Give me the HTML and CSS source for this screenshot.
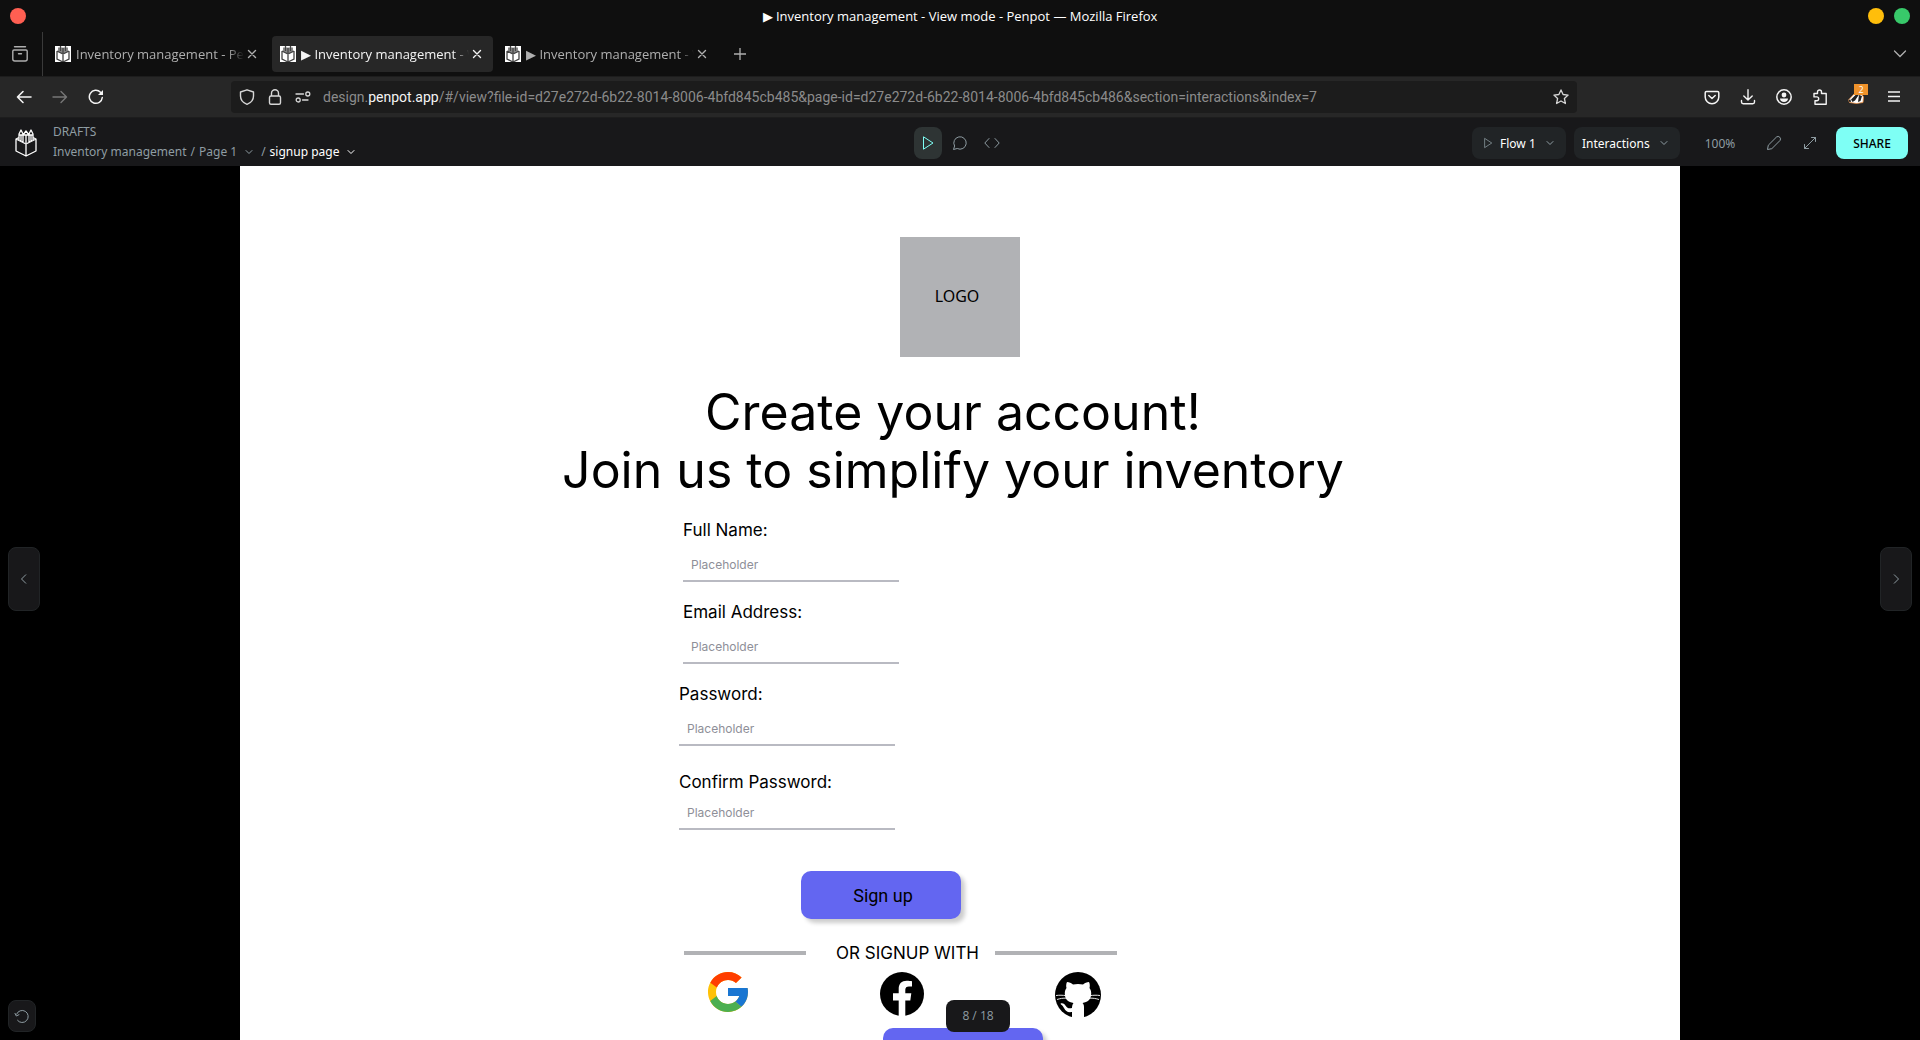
FILE: index.html
```html
<!DOCTYPE html>
<html lang="en">
<head>
<meta charset="utf-8">
<title>Inventory management - View mode - Penpot</title>
<link rel="stylesheet" href="styles.css">
</head>
<body>
<svg class="defs" aria-hidden="true">
  <symbol id="penpot" viewBox="0 0 22 28"><path d="M4 8.500 1 10v12l10 5 10-5V10l-3-1.500M1 10l10 5 10-5M11 15v12M4 11.500V5l2-4 2 4v8M8 6l3-4 3 4v7M14 5l2-4 2 4v6.500M6 6v6M11 6v8M16 6v6M4 6h14" fill="none" stroke="currentColor" stroke-width="1.300" stroke-linejoin="round"/></symbol>
  <symbol id="favicon" viewBox="0 0 16 16"><path fill="#fff" d="M0 0h16v16H0z"/><path d="M3 1.500h10V6L8 8 3 6z" fill="#888"/><path d="M2 5v8l6 3 6-3V5M2 5l6 3 6-3M8 8v8M5.500 0v5M8 2v5M10.500 0v5" fill="none" stroke="#444" stroke-width="1.300"/></symbol>
  <symbol id="x" viewBox="0 0 16 16"><path d="m4.500 4.500 7 7m0-7-7 7" fill="none" stroke="currentColor" stroke-width="1.400" stroke-linecap="round"/></symbol>
  <symbol id="chev" viewBox="0 0 16 16"><path d="m5 6.500 3 3 3-3" fill="none" stroke="currentColor" stroke-linecap="round" stroke-linejoin="round"/></symbol>
  <symbol id="play" viewBox="0 0 16 16"><path d="M3.500 1.800v12.400L13 8z" fill="none" stroke="currentColor" stroke-linejoin="round"/></symbol>
</svg>

<header class="titlebar">
  <button class="dot dot-close" aria-label="Close"></button>
  <span class="window-title">▶ Inventory management - View mode - Penpot — Mozilla Firefox</span>
  <span class="window-actions"><button class="dot dot-min" aria-label="Minimize"></button><button class="dot dot-max" aria-label="Maximize"></button></span>
</header>

<nav class="tabstrip" aria-label="Tabs">
  <button class="tab-history" aria-label="Recent browsing"><svg width="18" height="18" viewBox="0 0 18 18"><path d="M3.500 1.800h11M3 5h12a1.200 1.200 0 0 1 1.200 1.200V14a2 2 0 0 1-2 2H3.800a2 2 0 0 1-2-2V6.200A1.200 1.200 0 0 1 3 5zM7.500 8.700h3" fill="none" stroke="currentColor" stroke-width="1.400" stroke-linecap="round"/></svg></button>
  <div class="tab"><svg class="i16"><use href="#favicon"/></svg><span class="tab-title">Inventory management - Penpot</span><button class="tab-close" aria-label="Close tab"><svg class="i16"><use href="#x"/></svg></button></div>
  <div class="tab tab-active"><svg class="i16"><use href="#favicon"/></svg><span class="tab-title">▶ Inventory management - View mode</span><button class="tab-close" aria-label="Close tab"><svg class="i16"><use href="#x"/></svg></button></div>
  <div class="tab"><svg class="i16"><use href="#favicon"/></svg><span class="tab-title">▶ Inventory management - View mode</span><button class="tab-close" aria-label="Close tab"><svg class="i16"><use href="#x"/></svg></button></div>
  <button class="tab-new" aria-label="New tab"><svg class="i16" viewBox="0 0 16 16"><path d="M8 2v12M2 8h12" stroke="currentColor" stroke-width="1.300"/></svg></button>
  <button class="tab-list" aria-label="List all tabs"><svg class="i16" viewBox="0 0 16 16"><path d="m2.500 5 5.500 5.500L13.500 5" fill="none" stroke="currentColor" stroke-width="1.300" stroke-linecap="round"/></svg></button>
</nav>

<div class="toolbar">
  <button class="tool" aria-label="Back"><svg class="i16" viewBox="0 0 16 16"><path d="M15 8H1.500M7 2.500 1.500 8 7 13.500" fill="none" stroke="currentColor" stroke-width="1.600" stroke-linecap="round" stroke-linejoin="round"/></svg></button>
  <button class="tool tool-off" aria-label="Forward"><svg class="i16" viewBox="0 0 16 16"><path d="M1 8h13.500M9 2.500 14.500 8 9 13.500" fill="none" stroke="currentColor" stroke-width="1.400" stroke-linecap="round" stroke-linejoin="round"/></svg></button>
  <button class="tool" aria-label="Reload"><svg class="i16" viewBox="0 0 16 16"><path d="M14.300 8.500A6.500 6.500 0 1 1 12.500 3.300" fill="none" stroke="currentColor" stroke-width="1.500" stroke-linecap="round"/><path d="M15 1v5H10z" fill="currentColor"/></svg></button>
  <span class="spring"></span>
  <div class="urlbar">
    <svg class="i16" viewBox="0 0 16 16"><path d="M8 .8 14.500 3v4c0 4-2.500 6.800-6.500 8.300C4 13.800 1.500 11 1.500 7V3z" fill="none" stroke="currentColor" stroke-width="1.400" stroke-linejoin="round"/></svg>
    <svg class="i16" viewBox="0 0 16 16"><rect x="2.500" y="7" width="11" height="8.200" rx="1.500" fill="none" stroke="currentColor" stroke-width="1.400"/><path d="M4.500 7V4.300a3.500 3.500 0 0 1 7 0V7" fill="none" stroke="currentColor" stroke-width="1.400"/></svg>
    <svg class="i16" viewBox="0 0 16 16"><g fill="none" stroke="currentColor" stroke-width="1.300"><circle cx="12.800" cy="5" r="2"/><circle cx="3.200" cy="11" r="2"/><path d="M1 5h7.500M7.500 11H13" stroke-linecap="round"/></g></svg>
    <div class="url" role="textbox" aria-label="Address">design.<b>penpot.app</b>/#/view?file-id=d27e272d-6b22-8014-8006-4bfd845cb485&amp;page-id=d27e272d-6b22-8014-8006-4bfd845cb486&amp;section=interactions&amp;index=7</div>
    <svg class="i16" viewBox="0 0 16 16"><path d="m8 .9 2.100 4.600 5 .6-3.700 3.400 1 5L8 12l-4.400 2.500 1-5L.9 6.100l5-.6z" fill="none" stroke="currentColor" stroke-width="1.300" stroke-linejoin="round"/></svg>
  </div>
  <span class="spring"></span>
  <button class="tool" aria-label="Save to Pocket"><svg class="i16" viewBox="0 0 16 16"><path d="M2.500 2.500h11c.8 0 1.300.5 1.300 1.300V8A6.800 6.800 0 0 1 1.200 8V3.800c0-.8.5-1.300 1.300-1.300zM4.800 6.500 8 9.500l3.200-3" fill="none" stroke="currentColor" stroke-width="1.500" stroke-linecap="round" stroke-linejoin="round"/></svg></button>
  <button class="tool" aria-label="Downloads"><svg class="i16" viewBox="0 0 16 16"><path d="M8 .8v10M3.800 7 8 11l4.200-4M1.500 11.500V13c0 1 .7 1.700 1.700 1.700h9.600c1 0 1.700-.7 1.700-1.700v-1.500" fill="none" stroke="currentColor" stroke-width="1.400" stroke-linecap="round" stroke-linejoin="round"/></svg></button>
  <button class="tool" aria-label="Account"><svg class="i16" viewBox="0 0 16 16"><circle cx="8" cy="8" r="7.200" fill="none" stroke="currentColor" stroke-width="1.500"/><circle cx="8" cy="6" r="2.400" fill="currentColor"/><path d="M4 9.500h8c0 2-1.600 3.500-4 3.500s-4-1.500-4-3.500z" fill="currentColor"/></svg></button>
  <button class="tool" aria-label="Extensions"><svg class="i16" viewBox="0 0 16 16"><path d="M5.500 4.500V3a2 2 0 0 1 4 0v1.500h4.700v10.700H3v-3.500h1.800a1.900 1.900 0 0 0 0-3.800H2V4.500z" fill="none" stroke="currentColor" stroke-width="1.400" stroke-linejoin="round"/></svg></button>
  <button class="tool badger" aria-label="Privacy Badger, 2 blocked"><svg class="i16" viewBox="0 0 16 16"><path d="M.5 11 6 5l7-1 2.500 4-.5 5.500-6.500 1-7-1z" fill="#fff" stroke="#e8893a" stroke-width=".8"/><path d="M3 10.500 8 5.500h3L7 11.500 4.500 13zM11 6l3 1-1.500 5-2.500 1zM.5 11l2-.5.5 2.500-2-.3z" fill="#222"/></svg><span class="badge">2</span></button>
  <button class="tool menu" aria-label="Menu"><svg class="i16" viewBox="0 0 16 16"><path d="M2 3h12M2 7.500h12M2 12h12" stroke="currentColor" stroke-width="1.400"/></svg></button>
</div>

<header class="viewer-bar">
  <div class="viewer-left">
    <a href="#" class="logo" aria-label="Penpot"><svg width="22" height="28"><use href="#penpot"/></svg></a>
    <div class="crumbs">
      <span class="project">DRAFTS</span>
      <div class="path"><a href="#">Inventory management</a><span>/</span><button class="crumb">Page 1<svg class="i16"><use href="#chev"/></svg></button><span>/</span><button class="crumb crumb-current">signup page<svg class="i16"><use href="#chev"/></svg></button></div>
    </div>
  </div>
  <div class="modes">
    <button class="mode mode-active" aria-label="Interactions"><svg class="i16"><use href="#play"/></svg></button>
    <button class="mode" aria-label="Comments"><svg class="i16" viewBox="0 0 16 16"><path d="M1.500 14.500 2.600 11a6.200 6.200 0 1 1 2.600 2.500z" fill="none" stroke="currentColor" stroke-linejoin="round"/></svg></button>
    <button class="mode" aria-label="Inspect"><svg class="i16" viewBox="0 0 16 16"><path d="M5 3.500.8 8 5 12.500M11 3.500 15.200 8 11 12.500" fill="none" stroke="currentColor" stroke-linecap="round" stroke-linejoin="round"/></svg></button>
  </div>
  <div class="viewer-right">
    <div class="picker"><svg class="i12"><use href="#play"/></svg><select aria-label="Flow"><option>Flow 1</option></select><svg class="i16"><use href="#chev"/></svg></div>
    <div class="picker"><select aria-label="Interaction display"><option>Interactions</option></select><svg class="i16"><use href="#chev"/></svg></div>
    <button class="zoom-level">100%</button>
    <button class="edit" aria-label="Edit file"><svg class="i16" viewBox="0 0 16 16"><path d="m1.500 14.500.8-4.300L10.500 2a2.500 2.500 0 0 1 3.500 3.500L5.800 13.700z" fill="none" stroke="currentColor" stroke-linejoin="round"/></svg></button>
    <button class="edit" aria-label="Full screen"><svg class="i16" viewBox="0 0 16 16"><path d="M2.500 13.500l11-11M9.500 2.500h4v4M2.500 9.500v4h4" fill="none" stroke="currentColor" stroke-linecap="round" stroke-linejoin="round"/></svg></button>
    <button class="share">SHARE</button>
  </div>
</header>

<main class="stage">
  <div class="artboard">
    <div class="brand">LOGO</div>
    <h1 class="headline">Create your account!<br>Join us to simplify your inventory</h1>
    <form class="signup">
      <div class="field field-indent"><label for="name">Full Name:</label><input id="name" type="text" placeholder="Placeholder"></div>
      <div class="field field-indent"><label for="email">Email Address:</label><input id="email" type="email" placeholder="Placeholder"></div>
      <div class="field"><label for="pass">Password:</label><input id="pass" type="password" placeholder="Placeholder"></div>
      <div class="field field-confirm"><label for="confirm">Confirm Password:</label><input id="confirm" type="password" placeholder="Placeholder"></div>
      <button class="primary" type="submit">Sign up</button>
      <div class="divider"><span class="rule"></span><span class="divider-text">OR SIGNUP WITH</span><span class="rule"></span></div>
      <div class="social">
        <a href="#" aria-label="Google"><svg width="40" height="40" viewBox="4 4 40 40"><path fill="#FFC107" d="M43.611,20.083H42V20H24v8h11.303c-1.649,4.657-6.080,8-11.303,8c-6.627,0-12-5.373-12-12c0-6.627,5.373-12,12-12c3.059,0,5.842,1.154,7.961,3.039l5.657-5.657C34.046,6.053,29.268,4,24,4C12.955,4,4,12.955,4,24c0,11.045,8.955,20,20,20c11.045,0,20-8.955,20-20C44,22.659,43.862,21.350,43.611,20.083z"/><path fill="#FF3D00" d="M6.306,14.691l6.571,4.819C14.655,15.108,18.961,12,24,12c3.059,0,5.842,1.154,7.961,3.039l5.657-5.657C34.046,6.053,29.268,4,24,4C16.318,4,9.656,8.337,6.306,14.691z"/><path fill="#4CAF50" d="M24,44c5.166,0,9.860-1.977,13.409-5.192l-6.190-5.238C29.211,35.091,26.715,36,24,36c-5.202,0-9.619-3.317-11.283-7.946l-6.522,5.025C9.505,39.556,16.227,44,24,44z"/><path fill="#1976D2" d="M43.611,20.083H42V20H24v8h11.303c-0.792,2.237-2.231,4.166-4.087,5.571l6.193,5.236C36.971,39.205,44,34,44,24C44,22.659,43.862,21.350,43.611,20.083z"/></svg></a>
        <a href="#" aria-label="Facebook"><svg width="44" height="44" viewBox="0 0 44 44"><circle cx="22" cy="22" r="22"/><path fill="#fff" d="M18.700 44V28.500H13V21.300h5.700V17c0-5.500 3-8.300 8-8.300 2 0 4 .2 5.300.5v5.300h-3c-2.500 0-3.700 1.200-3.700 3.300v3.500h6l-1 7.200h-5V44z"/></svg></a>
        <a href="#" aria-label="GitHub"><svg width="46" height="46" viewBox="0 0 46 46"><circle cx="23" cy="23" r="23"/><path fill="#fff" d="M12 10c2 0 4.500 1.300 6 2.500 3-.8 7-.8 10 0 1.500-1.200 4-2.500 6-2.500 1 2 1 4.500.5 6 1.200 1.500 1.700 3 1.700 5.500 0 6-3.500 8.700-8.700 9.500 1 1 1.500 2.200 1.500 4V46H17v-6c-4.500.7-6.500-1-7.700-3.500C8.500 35 7.500 33.500 6 32.500c-.7-.7-.3-1.300.8-1.200 2 .1 3 1.200 4 2.700 1.500 2.200 3.200 2.700 6.200 2 0-2 .5-3.800 1.500-5-5.200-.8-8.700-3.500-8.700-9.500 0-2.500.5-4 1.700-5.500-.5-1.500-.5-4 .5-6z"/><path d="M1 23.500c3-.4 7-.4 10 .2M2 27.500c3-1 6-1.500 9.500-1.300M45 23.500c-3-.4-7-.4-10 .2M44 27.500c-3-1-6-1.500-9.500-1.300" fill="none" stroke="#fff" stroke-width=".9"/></svg></a>
      </div>
      <button class="primary primary-next" type="button" aria-label="Next"></button>
    </form>
  </div>
  <button class="pager pager-prev" aria-label="Previous board"><svg class="i16" viewBox="0 0 16 16"><path d="M10 3.500 5.500 8l4.500 4.500" fill="none" stroke="currentColor"/></svg></button>
  <button class="pager pager-next" aria-label="Next board"><svg class="i16" viewBox="0 0 16 16"><path d="M6 3.500 10.500 8 6 12.500" fill="none" stroke="currentColor"/></svg></button>
  <button class="reset" aria-label="Reset"><svg class="i16" viewBox="0 0 16 16"><path d="M2.500 6.500A6 6 0 1 1 3.300 12M.8 5l1.500 3 3-1.500" fill="none" stroke="currentColor"/></svg></button>
  <div class="counter">8 / 18</div>
</main>
</body>
</html>
```
FILE: styles.css
```css
* { box-sizing: border-box; }
body {
  margin: 0;
  height: 100vh;
  display: flex;
  flex-direction: column;
  overflow: hidden;
  background: #000;
  font-family: "Open Sans", "Noto Sans", sans-serif;
  font-size: 13px;
}
button, input, select { font: inherit; color: inherit; border: 0; padding: 0; margin: 0; background: none; }
button { display: flex; align-items: center; justify-content: center; }
a { color: inherit; text-decoration: none; }
svg { display: block; flex: none; }
.defs { position: absolute; width: 0; height: 0; }
.i16 { width: 16px; height: 16px; }
.i12 { width: 12px; height: 12px; }

/* Window title */
.titlebar {
  flex: none;
  height: 32px;
  padding: 0 10px;
  display: grid;
  grid-template-columns: 1fr auto 1fr;
  align-items: center;
  background: #0f0f0f;
  color: #fff;
}
.window-actions { display: flex; justify-content: flex-end; gap: 10px; }
.dot { width: 16px; height: 16px; border-radius: 50%; }
.dot-close { background: #ff5f52; }
.dot-min { background: #ffbe0b; }
.dot-max { background: #38c96a; }

/* Tabs */
.tabstrip {
  flex: none;
  height: 44px;
  display: flex;
  align-items: center;
  gap: 4px;
  background: #0f0f0f;
  color: #afafaf;
}
.tab-history { width: 43px; height: 44px; padding-right: 2px; border-right: 1px solid #3a3a3a; }
.tab {
  width: 221px;
  height: 36px;
  padding: 0 8px;
  display: flex;
  align-items: center;
  border-radius: 4px;
}
.tab-active { background: #272727; color: #f4f4f4; }
.tab-title {
  flex: 1;
  min-width: 0;
  margin-left: 5px;
  white-space: nowrap;
  overflow: hidden;
  -webkit-mask-image: linear-gradient(to left, transparent, #000 16px);
  mask-image: linear-gradient(to left, transparent, #000 16px);
}
.tab-new { width: 36px; height: 36px; }
.tab-list { width: 36px; height: 36px; margin-left: auto; margin-right: 2px; }

/* Navigation toolbar */
.toolbar {
  flex: none;
  height: 42px;
  padding: 0 8px 0 6px;
  display: flex;
  align-items: center;
  background: #272727;
  border-top: 1px solid #1d1d1d;
  border-bottom: 1px solid #1d1d1d;
  color: #f4f4f4;
}
.tool { width: 36px; height: 32px; flex: none; }
.tool-off { color: #777; }
.spring { flex: 0 1 117px; }
.urlbar {
  flex: 1;
  min-width: 0;
  height: 32px;
  padding: 0 8px;
  display: flex;
  align-items: center;
  gap: 12px;
  border-radius: 4px;
  background: #1c1c1c;
  color: #d6d6d6;
}
.url {
  flex: 1;
  min-width: 0;
  overflow: hidden;
  white-space: nowrap;
  font-family: Roboto, sans-serif;
  font-size: 14px;
  color: #8b8b8b;
}
.url b { font-weight: 400; color: #f4f4f4; }
.badger { position: relative; }
.menu { margin-left: 2px; }
.badge {
  position: absolute;
  top: 3px;
  left: 16px;
  width: 14px;
  height: 11px;
  background: #f0932b;
  color: #fff;
  font-size: 9px;
  line-height: 11px;
}

/* Viewer header */
.viewer-bar {
  flex: none;
  height: 48px;
  padding: 2px 12px 0;
  display: grid;
  grid-template-columns: 1fr auto 1fr;
  align-items: center;
  background: #18181a;
  color: #8f9da3;
  font-family: "Noto Sans", sans-serif;
  font-size: 12px;
}
.viewer-left { display: flex; align-items: center; gap: 16px; padding-left: 3px; }
.logo { color: #fff; }
.crumbs { display: flex; flex-direction: column; gap: 4px; line-height: 16px; padding-bottom: 2px; }
.path { display: flex; gap: 4px; white-space: nowrap; }
.crumb { gap: 4px; }
.crumb-current { color: #fff; }
.modes { display: flex; gap: 4px; }
.mode { width: 28px; height: 32px; border-radius: 8px; }
.mode-active { background: #2e3434; color: #7efff5; }
.viewer-right { display: flex; align-items: center; justify-content: flex-end; gap: 8px; }
.picker {
  height: 32px;
  padding: 0 8px;
  display: flex;
  align-items: center;
  gap: 4px;
  border-radius: 8px;
  background: #212426;
}
.picker select { appearance: none; color: #fff; padding-right: 2px; }
.picker .i12 { margin: 0 2px; }
.zoom-level { width: 64px; height: 32px; }
.edit { width: 28px; height: 32px; }
.share {
  width: 72px;
  height: 32px;
  margin-left: 4px;
  border-radius: 8px;
  background: #7efff5;
  color: #000;
  font-weight: 500;
}

/* Canvas */
.stage {
  position: relative;
  flex: 1;
  min-height: 0;
  overflow: hidden;
  display: flex;
  justify-content: center;
  align-items: flex-start;
}
.artboard {
  width: 75%;
  min-height: 100%;
  padding-top: 71px;
  background: #fff;
  color: #000;
  font-family: Inter, sans-serif;
}
.brand {
  width: 120px;
  height: 120px;
  margin: 0 auto;
  padding: 0 6px 2px 0;
  display: flex;
  align-items: center;
  justify-content: center;
  background: #b1b2b5;
  font-family: "Noto Sans", sans-serif;
  font-size: 16px;
}
.headline {
  margin: 26px 14px 21px 0;
  text-align: center;
  font-size: 50px;
  line-height: 58px;
  font-weight: 400;
}
.signup { width: 438px; margin-left: calc(50% - 281px); }
.field { width: 216px; margin-bottom: 20px; display: flex; flex-direction: column; gap: 8px; }
.field-indent { margin-left: 4px; }
.field-confirm { margin: 26px 0 41px; gap: 4px; }
.field label { font-size: 17px; line-height: 20px; }
.field input {
  width: 100%;
  height: 34px;
  padding: 0 8px;
  border-bottom: 2px solid #b9bac2;
  border-radius: 0;
  outline: 0;
  font-size: 12px;
}
.field input::placeholder { color: #8e8f98; opacity: 1; }
.primary {
  width: 160px;
  height: 48px;
  margin-left: 122px;
  padding-left: 4px;
  border-radius: 10px;
  background: #6366f1;
  box-shadow: 4px 4px 4px rgba(0, 0, 0, .2);
  font-family: Roboto, sans-serif;
  font-size: 18px;
}
.primary-next { margin: 10px 0 0 204px; }
.divider { margin: 24px 0 9px 5px; display: flex; align-items: center; }
.rule { width: 122px; height: 4px; background: #b1b2b5; }
.divider-text { flex: 1; padding-right: 16px; text-align: right; font-size: 17px; line-height: 20px; white-space: nowrap; }
.social { margin: 0 16px 0 29px; display: flex; justify-content: space-between; align-items: flex-start; }

/* Floating viewer controls */
.pager, .reset {
  position: absolute;
  border: 1px solid #212426;
  border-radius: 8px;
  background: #18181a;
  color: #8f9da3;
}
.pager { top: calc(50% - 56px); width: 32px; height: 64px; }
.pager-prev { left: 8px; }
.pager-next { right: 8px; }
.reset { left: 8px; bottom: 8px; width: 28px; height: 32px; }
.counter {
  position: absolute;
  left: calc(50% - 14px);
  bottom: 8px;
  width: 64px;
  border-radius: 8px;
  background: #18181a;
  color: #8f9da3;
  font-size: 12px;
  line-height: 32px;
  text-align: center;
}
```
